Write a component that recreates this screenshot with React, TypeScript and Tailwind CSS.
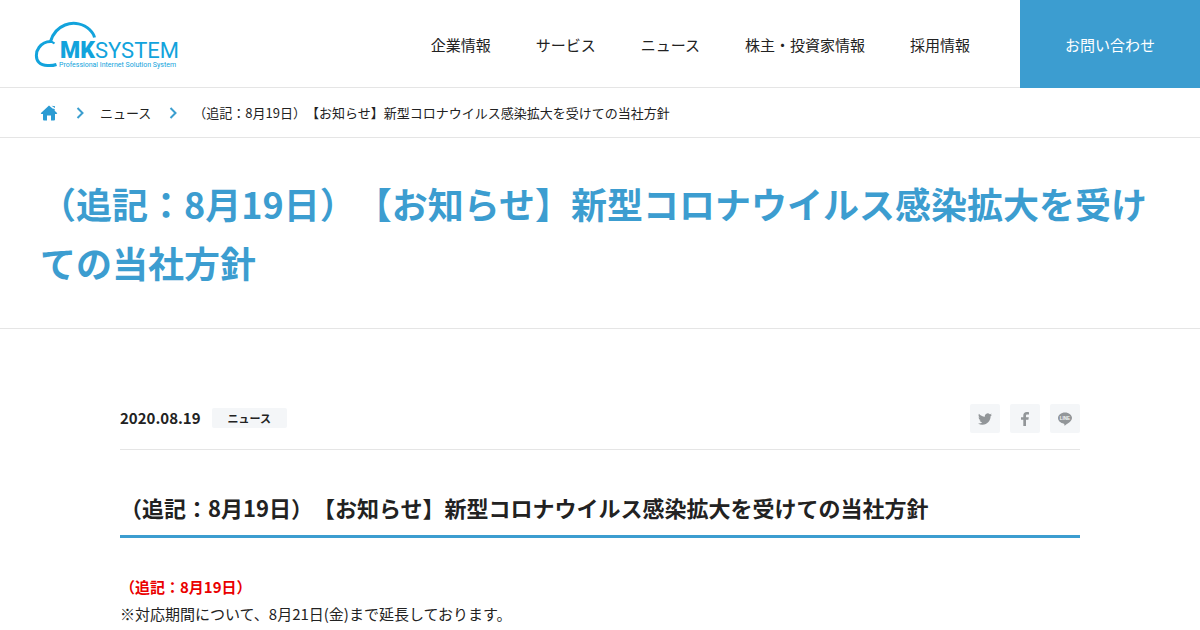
import React from "react";

const TITLE = "（追記：8月19日）【お知らせ】新型コロナウイルス感染拡大を受けての当社方針";

const NAV_ITEMS = ["企業情報", "サービス", "ニュース", "株主・投資家情報", "採用情報"];

function Logo() {
  return (
    <svg viewBox="0 0 148 48" className="h-12 w-[148px]" role="img" aria-label="MKSYSTEM">
      <path
        d="M22.500 43.500C18 45 9 45.500 5 41.500C1.500 38 1.500 31 5 26.500C8 22.500 12 20.500 16.500 20.500C18.500 13.500 23.500 7 31 4C40 0.500 50 3 55.500 8.500C58.500 11.500 60 13.500 60.500 16.500"
        fill="none"
        stroke="#12a3dc"
        strokeWidth="3"
      />
      <path d="M15 20.500C17.500 20.500 19 21 20.500 22.500" fill="none" stroke="#12a3dc" strokeWidth="2" />
      <text x="26" y="37" fill="#12a3dc" fontSize="23" fontWeight="900" className="font-['Roboto',sans-serif]">
        MK
      </text>
      <text x="61" y="37" fill="#12a3dc" fontSize="22" className="font-['Roboto',sans-serif]">
        SYSTEM
      </text>
      <text x="25" y="46" fill="#12a3dc" fontSize="7" className="font-['Roboto',sans-serif]">
        Professional Internet Solution System
      </text>
    </svg>
  );
}

function HomeIcon() {
  return (
    <svg viewBox="0 0 18 16" className="h-4 w-[18px]" fill="#2b9bd3" aria-hidden="true">
      <path d="M9 0.500L0.700 8.200L1.400 9H3V14.500Q3 15.500 4 15.500H7V10.500H11V15.500H14Q15 15.500 15 14.500V9H16.600L17.300 8.200L14.700 5.800V4L12.500 3.600Z" />
      <path d="M11.500 0.800L15 3V1.200Z" />
    </svg>
  );
}

function Chevron() {
  return (
    <svg viewBox="0 0 8 12" className="h-3 w-2" fill="none" stroke="#3b9ecf" strokeWidth="2" aria-hidden="true">
      <path d="M1.500 1L6.500 6L1.500 11" />
    </svg>
  );
}

function TwitterIcon() {
  return (
    <svg viewBox="0 0 24 24" className="size-3.5" fill="#929699" aria-hidden="true">
      <path d="M23.953 4.570a10 10 0 01-2.825.775 4.958 4.958 0 002.163-2.723c-.951.555-2.005.959-3.127 1.184a4.920 4.920 0 00-8.384 4.482C7.690 8.095 4.067 6.130 1.640 3.162a4.822 4.822 0 00-.666 2.475c0 1.710.870 3.213 2.188 4.096a4.904 4.904 0 01-2.228-.616v.060a4.923 4.923 0 003.946 4.827 4.996 4.996 0 01-2.212.085 4.936 4.936 0 004.604 3.417 9.867 9.867 0 01-6.102 2.105c-.390 0-.779-.023-1.170-.067a13.995 13.995 0 007.557 2.209c9.053 0 13.998-7.496 13.998-13.985 0-.210 0-.420-.015-.630A9.935 9.935 0 0024 4.590z" />
    </svg>
  );
}

function FacebookIcon() {
  return (
    <svg viewBox="0 0 8 14" className="h-3.5 w-2" fill="#929699" aria-hidden="true">
      <path d="M2.300 14V7.800H0V5.300H2.300V3.600C2.300 1.200 3.600 0 5.700 0C6.800 0 7.700.1 8 .2V2.500H6.500C5.300 2.500 5 3 5 3.900V5.300H7.800L7.400 7.800H5V14Z" />
    </svg>
  );
}

function LineIcon() {
  return (
    <svg viewBox="0 0 14 14" className="size-3.5" aria-hidden="true">
      <path
        d="M7 .5C3.100 .5 0 3 0 6.100C0 8.900 2.500 11.200 5.900 11.700C6.500 11.800 6.400 12.400 6.300 13.400C6.400 13.700 6.700 13.600 7 13.400C9 12.200 11.300 10.700 12.700 9.100C13.500 8.200 14 7.200 14 6.100C14 3 10.900 .5 7 .5Z"
        fill="#929699"
      />
      <text x="7" y="7.700" textAnchor="middle" fontSize="4.500" fontWeight="700" fill="#f4f6f8" className="font-['Liberation_Sans',sans-serif]">
        LINE
      </text>
    </svg>
  );
}

const SHARE_LINKS = [
  { label: "Twitter", icon: <TwitterIcon /> },
  { label: "Facebook", icon: <FacebookIcon /> },
  { label: "LINE", icon: <LineIcon /> },
];

export default function App() {
  return (
    <div
      className="bg-white font-['Noto_Sans_CJK_JP',sans-serif] text-[15px] text-[#222] [text-spacing-trim:space-all]"
      lang="ja"
    >
      <header className="flex h-22 items-stretch justify-between border-b border-[#e5e5e5]">
        <a href="#" className="flex items-center pt-[3px] pl-[34px]">
          <Logo />
        </a>
        <div className="flex items-stretch">
          <nav className="flex items-center gap-[45px] pt-[3px] pr-[50px]">
            {NAV_ITEMS.map((item) => (
              <a key={item} href="#">
                {item}
              </a>
            ))}
          </nav>
          <a href="#" className="-mb-px flex w-[180px] items-center justify-center bg-[#3c9dd0] pt-[3px] text-white">
            お問い合わせ
          </a>
        </div>
      </header>

      <nav aria-label="パンくずリスト" className="border-b border-[#e5e5e5] px-10">
        <ol className="flex h-[49px] items-center text-[13px]">
          <li>
            <a href="#" aria-label="ホーム">
              <HomeIcon />
            </a>
          </li>
          <li className="flex items-center gap-4 pl-[18px]">
            <Chevron />
            <a href="#">ニュース</a>
          </li>
          <li className="flex items-center gap-4 pl-[18px]">
            <Chevron />
            <span>{TITLE}</span>
          </li>
        </ol>
      </nav>

      <div className="border-b border-[#e5e5e5] px-10 py-9">
        <p className="text-[36px] leading-[59px] font-bold text-[#3c9dd0]">{TITLE}</p>
      </div>

      <main className="mx-auto max-w-[1040px] px-10 pt-[75px]">
        <div className="flex items-start justify-between border-b border-[#e5e5e5] pb-4">
          <div className="flex items-center gap-[11px]">
            <time dateTime="2020-08-19" className="leading-[27px] font-bold">
              2020.08.19
            </time>
            <span className="rounded-xs bg-[#f4f6f8] px-4 text-[11px] leading-5 font-bold">ニュース</span>
          </div>
          <ul className="flex gap-2.5">
            {SHARE_LINKS.map(({ label, icon }) => (
              <li key={label}>
                <a href="#" aria-label={label} className="flex h-[29px] w-[30px] items-center justify-center rounded-xs bg-[#f4f6f8]">
                  {icon}
                </a>
              </li>
            ))}
          </ul>
        </div>

        <h1 className="mt-10 border-b-3 border-[#3c9dd0] pb-2.5 text-[22px] leading-[35px] font-bold">{TITLE}</h1>

        <p className="mt-[35px] leading-[27px]">
          <strong className="font-bold text-[#ea0000]">（追記：8月19日）</strong>
          <br />
          ※対応期間について、8月21日(金)まで延長しております。
        </p>
      </main>
    </div>
  );
}
